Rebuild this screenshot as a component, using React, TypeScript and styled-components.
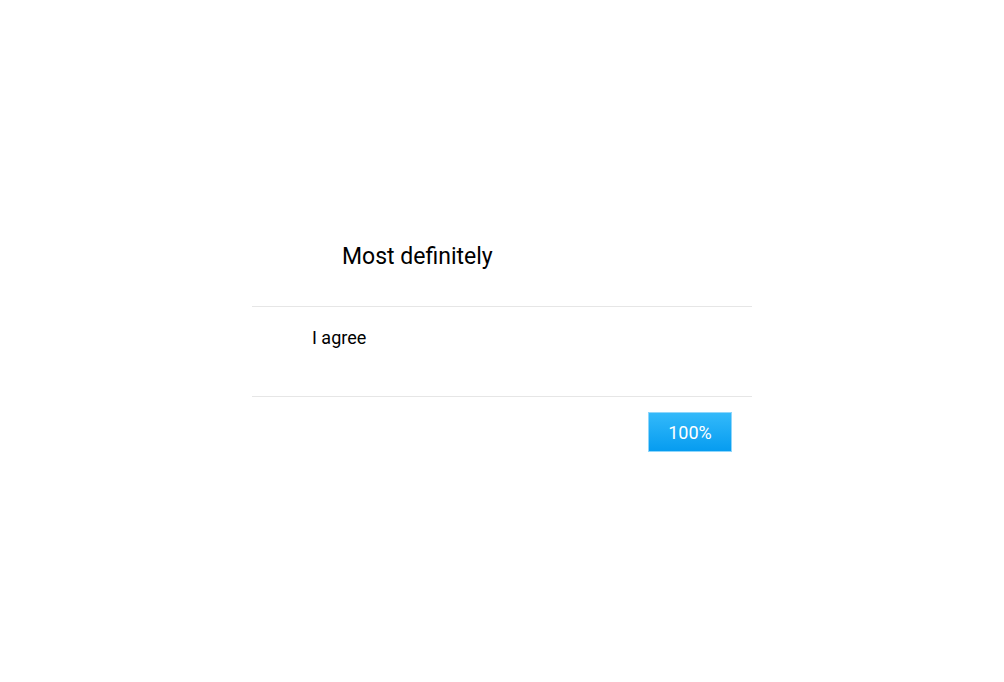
import React from "react";
import styled, { createGlobalStyle } from "styled-components";

const Global = createGlobalStyle`
  html, body { margin: 0; padding: 0; background: #ffffff; }
  body { font-family: Roboto, "Noto Sans", sans-serif; color: #000; }
`;

const Page = styled.div`
  width: 1004px;
  height: 682px;
  display: flex;
  justify-content: center;
  padding-top: 227px;
  box-sizing: border-box;
`;

const Panel = styled.div`
  width: 500px;
  display: flex;
  flex-direction: column;
`;

const Title = styled.div`
  height: 80px;
  box-sizing: border-box;
  padding-left: 90px;
  padding-top: 15px;
  font-size: 23px;
  line-height: 30px;
  border-bottom: 1px solid #e6e6e6;
`;

const Body = styled.div`
  height: 90px;
  box-sizing: border-box;
  padding-left: 60px;
  padding-top: 19px;
  font-size: 18px;
  line-height: 24px;
  border-bottom: 1px solid #e6e6e6;
`;

const Footer = styled.div`
  display: flex;
  justify-content: flex-end;
  padding: 15px 20px;
`;

const Button = styled.button`
  width: 84px;
  height: 40px;
  border: 1px solid #8fd6fb;
  background: linear-gradient(#33b9fa, #069cf0);
  color: #fff;
  font-family: Roboto, sans-serif;
  font-size: 18px;
  padding: 0;
  cursor: pointer;
`;

export default function App() {
  return (
    <>
      <Global />
      <Page>
        <Panel>
          <Title>Most definitely</Title>
          <Body>I agree</Body>
          <Footer>
            <Button>100%</Button>
          </Footer>
        </Panel>
      </Page>
    </>
  );
}
